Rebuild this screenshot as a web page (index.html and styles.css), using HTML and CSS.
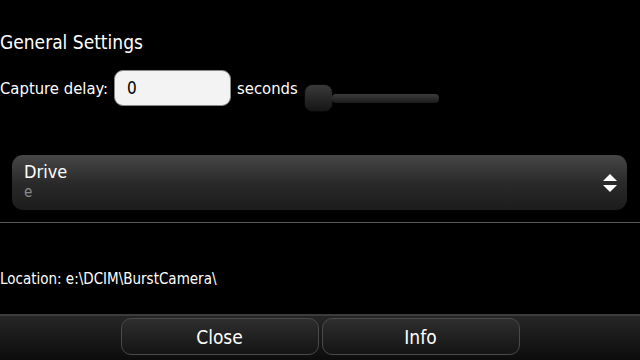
FILE: index.html
```html
<!DOCTYPE html>
<html>
<head>
<meta charset="utf-8">
<link rel="stylesheet" href="styles.css">
</head>
<body>
<div class="screen">
  <main class="content">
    <h1 class="title">General Settings</h1>
    <div class="delay-row">
      <span class="label">Capture delay:</span>
      <div class="input">0</div>
      <span class="label">seconds</span>
      <div class="slider">
        <div class="thumb"></div>
        <div class="track"></div>
      </div>
    </div>
    <div class="combo">
      <div class="combo-text">
        <div class="combo-label">Drive</div>
        <div class="combo-value">e</div>
      </div>
      <svg class="arrows" width="14" height="18" viewBox="0 0 14 18">
        <polygon points="7,0 14,7 0,7" fill="#fff"/>
        <polygon points="0,11 14,11 7,18" fill="#fff"/>
      </svg>
    </div>
    <div class="separator"></div>
    <div class="location">Location: e:\DCIM\BurstCamera\</div>
  </main>
  <footer class="toolbar">
    <button class="btn">Close</button>
    <button class="btn">Info</button>
  </footer>
</div>
</body>
</html>
```
FILE: styles.css
```css
html, body {
  margin: 0;
  padding: 0;
  background: #000;
}
.screen {
  width: 640px;
  height: 360px;
  display: flex;
  flex-direction: column;
  background: #000;
  color: #fff;
  font-family: "DejaVu Sans Condensed", "Liberation Sans Narrow", "Liberation Sans", sans-serif;
  overflow: hidden;
}
.content {
  flex: 1;
  display: flex;
  flex-direction: column;
}
.title {
  margin: 30px 0 0 0;
  font-size: 19px;
  font-weight: normal;
  line-height: 24px;
}
.delay-row {
  display: flex;
  align-items: center;
  margin-top: 15px;
  height: 38px;
}
.label {
  font-size: 16.5px;
}
.input {
  width: 103px;
  height: 34px;
  margin: 0 6px 0 6px;
  padding-left: 12px;
  box-sizing: content-box;
  background: #f3f3f3;
  border: 1px solid #888;
  border-radius: 9px;
  color: #000;
  font-size: 17px;
  line-height: 34px;
}
.slider {
  display: flex;
  align-items: center;
  margin-left: 7px;
  margin-top: 20px;
}
.thumb {
  width: 27px;
  height: 26px;
  border-radius: 8px;
  background: linear-gradient(#3a3a3a, #151515);
  box-shadow: 0 0 1px #555;
}
.track {
  width: 107px;
  height: 9px;
  border-radius: 4px;
  background: linear-gradient(#3d3d3d, #1a1a1a);
}
.combo {
  margin: 48px 13px 0 12px;
  height: 55px;
  border-radius: 11px;
  background: linear-gradient(#474747, #2a2a2a 50%, #1c1c1c);
  display: flex;
  align-items: center;
  padding: 0 12px;
}
.combo-text {
  flex: 1;
  display: flex;
  flex-direction: column;
}
.combo-label {
  font-size: 18px;
  line-height: 22px;
  margin-top: -3px;
}
.combo-value {
  font-size: 15px;
  line-height: 18px;
  color: #8a8a8a;
}
.arrows {
  margin-right: -2px;
}
.separator {
  margin-top: 12px;
  height: 1px;
  background: #5a5a5a;
}
.location {
  margin-top: 46px;
  font-size: 15px;
  line-height: 20px;
}
.toolbar {
  height: 46px;
  border-top: 2px solid #3c3c3c;
  background: linear-gradient(#262626, #0c0c0c);
  display: flex;
  justify-content: center;
  align-items: flex-start;
  gap: 3px;
  box-sizing: border-box;
  padding-top: 2px;
}
.btn {
  width: 198px;
  height: 37px;
  border: 1px solid #4a4a4a;
  border-radius: 10px;
  background: linear-gradient(#2e2e2e, #141414);
  color: #fff;
  font-family: inherit;
  font-size: 19px;
  padding: 0;
}
```
